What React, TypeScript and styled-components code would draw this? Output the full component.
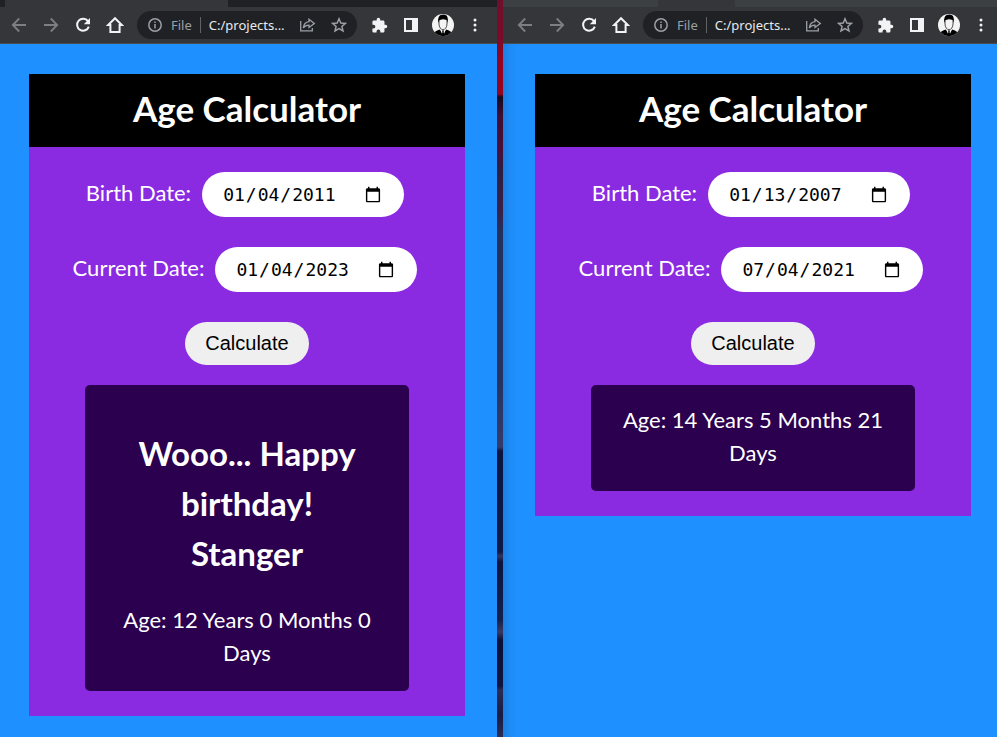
import React, { useId, useState } from "react";
import styled, { createGlobalStyle } from "styled-components";

const GlobalStyle = createGlobalStyle`
  *, *::before, *::after { box-sizing: border-box; }
  body { margin: 0; background: #1e90ff; }
`;

const Desktop = styled.main`
  display: grid;
  grid-template-columns: 497fr 6px 494fr;
  min-height: 100vh;
`;

const Seam = styled.div`
  background: linear-gradient(
    #6f0f2c 0,
    #7d0a2a 40px,
    #96041f 60px,
    #96041f 94px,
    #120a1c 97px,
    #3f0d33 115px,
    #4a0f38 150px,
    #2b1f42 170px,
    #3b1f48 210px,
    #24305c 230px,
    #26335f 380px,
    #303a66 430px,
    #333c68 447px,
    #0a1640 451px,
    #0d1a48 552px,
    #303560 556px,
    #0a1640 562px,
    #14204c 620px,
    #383a62 632px,
    #081238 640px,
    #0c1640 686px,
    #2a2d55 690px,
    #161c42 715px,
    #2a2d55 100%
  );
`;

const Window = styled.section<{ $shaded?: boolean }>`
  display: flex;
  flex-direction: column;
  min-width: 0;
  background: ${(p) =>
    p.$shaded
      ? "linear-gradient(90deg, #1d7fe0 0, #1e8cf7 8px, #1e90ff 14px)"
      : "#1e90ff"};
`;

const TabStrip = styled.div<{ $color: string }>`
  display: flex;
  height: 7px;
  background: ${(p) => p.$color};
`;

const ActiveTab = styled.div<{ $before: number; $width: number }>`
  flex: 0 0 ${(p) => p.$width}px;
  margin-left: ${(p) => p.$before}px;
  background: #35363a;
`;

const Toolbar = styled.nav<{ $start: number; $end: number }>`
  display: flex;
  align-items: center;
  height: 37px;
  padding: 0 ${(p) => p.$end}px 0 ${(p) => p.$start}px;
  background: #35363a;
  border-bottom: 1px solid #4a4c50;
`;

const ToolButton = styled.button<{ $dim?: boolean }>`
  display: flex;
  align-items: center;
  justify-content: center;
  flex: 0 0 32px;
  height: 28px;
  padding: 0;
  border: 0;
  background: none;
  color: ${(p) => (p.$dim ? "#7d7f83" : "#f1f3f4")};
`;

const AddressBar = styled.div`
  display: flex;
  align-items: center;
  flex: 1;
  min-width: 0;
  height: 28px;
  margin: 0 6px;
  padding: 0 2px;
  border-radius: 14px;
  background: #202124;
  color: #9aa0a6;
  font: 13px/20px "Noto Sans", sans-serif;
`;

const Scheme = styled.span`
  padding-right: 8px;
  border-right: 1px solid #5f6368;
  line-height: 16px;
`;

const Address = styled.span`
  flex: 1;
  padding-left: 8px;
  color: #e8eaed;
  white-space: nowrap;
`;

const Page = styled.div<{ $left: number; $right: number }>`
  padding: 30px ${(p) => p.$right}px 20px ${(p) => p.$left}px;
  font: 22px/33px Lato, sans-serif;
  color: #fff;
  text-align: center;
`;

const Card = styled.article`
  padding-bottom: 25px;
  background: #8a2be2;
`;

const Title = styled.h1`
  margin: 0;
  padding: 8px 10px 12px;
  background: #000;
  font-size: 35px;
  line-height: 53px;
  font-weight: 700;
`;

const Form = styled.form`
  display: flex;
  flex-direction: column;
  align-items: center;
  gap: 30px;
  padding: 25px 0 20px;
`;

const Field = styled.div`
  display: flex;
  align-items: center;
  gap: 11px;
  padding-right: 4px;
`;

const Label = styled.label`
  padding-bottom: 4px;
`;

const DateInput = styled.input`
  width: 202px;
  height: 45px;
  padding: 10px 20px;
  border: 0;
  border-radius: 25px;
  background: #fff;
  color: #000;
  font: 18px "DejaVu Sans Mono", monospace;
`;

const Submit = styled.button`
  height: 43px;
  padding: 0 20px;
  border: 0;
  border-radius: 25px;
  background: #efefef;
  color: #000;
  font: 20px "Liberation Sans", Arial, sans-serif;
`;

const Result = styled.div`
  margin: 0 56px;
  padding: 18px 20px 22px;
  border-radius: 5px;
  background: #2a004f;
`;

const Greeting = styled.h2`
  margin: 25px 0;
  font-size: 33px;
  line-height: 50px;
  font-weight: 700;
`;

const Age = styled.p`
  margin: 0;
`;

const line = { fill: "none", stroke: "currentColor" } as const;

const BackIcon = () => (
  <svg width="16" height="16" viewBox="0 0 16 16" {...line} strokeWidth="1.8">
    <path d="M15 8H2M8.2 1.5 1.8 8l6.4 6.5" />
  </svg>
);

const ForwardIcon = () => (
  <svg width="16" height="16" viewBox="0 0 16 16" {...line} strokeWidth="1.8">
    <path d="M1 8h13M7.8 1.5 14.2 8l-6.4 6.5" />
  </svg>
);

const ReloadIcon = () => (
  <svg width="16" height="16" viewBox="0 0 16 16" {...line} strokeWidth="2">
    <path d="M13 4.2A6 6 0 1 0 13.8 9.6" />
    <path d="M15 1v6.2H8.8z" fill="currentColor" stroke="none" />
  </svg>
);

const HomeIcon = () => (
  <svg width="18" height="18" viewBox="0 0 18 18" {...line} strokeWidth="2">
    <path d="M9 2.2 2.2 9H4.4v7h9.2V9h2.2z" />
  </svg>
);

const InfoIcon = () => (
  <svg width="16" height="16" viewBox="0 0 16 16" {...line} strokeWidth="1.5">
    <circle cx="8" cy="8" r="6.2" />
    <path d="M8 7v4.5M8 4.5V6" />
  </svg>
);

const ShareIcon = () => (
  <svg width="17" height="16" viewBox="0 0 17 16" {...line} strokeWidth="1.3">
    <path d="M1.7 4v9.8h11.6V11" />
    <path d="M10 2.2 15.3 6.5 10 10.500V8.200C7.300 8.200 5.600 9 4.300 11 4.700 7.300 6.500 5 10 4.600z" />
  </svg>
);

const StarIcon = () => (
  <svg width="16" height="16" viewBox="0 0 16 16" {...line} strokeWidth="1.5">
    <path d="m8 1.800 1.800 4.200 4.600.4-3.500 3 1.100 4.500L8 11.500l-4 2.400 1.100-4.500-3.500-3 4.600-.4z" />
  </svg>
);

const PuzzleIcon = () => (
  <svg width="17" height="17" viewBox="0 0 24 24" fill="currentColor">
    <path d="M20.5 11H19V7c0-1.100-.9-2-2-2h-4V3.500a2.500 2.500 0 0 0-5 0V5H4c-1.100 0-2 .9-2 2v3.800h1.500a2.700 2.700 0 0 1 0 5.400H2V20c0 1.100.9 2 2 2h3.800v-1.500a2.700 2.700 0 0 1 5.400 0V22H17c1.100 0 2-.9 2-2v-4h1.500a2.500 2.500 0 0 0 0-5z" />
  </svg>
);

const PanelIcon = () => (
  <svg width="16" height="16" viewBox="0 0 16 16" fill="currentColor">
    <path fillRule="evenodd" d="M1 1h14v14H1zM3 3v10h6V3z" />
  </svg>
);

const Avatar = () => {
  const clip = useId();
  return (
    <svg width="22" height="22" viewBox="0 0 22 22">
      <clipPath id={clip}>
        <circle cx="11" cy="11" r="11" />
      </clipPath>
      <g clipPath={`url(#${clip})`}>
        <path fill="#f4f4f4" d="M0 0h22v22H0z" />
        <path d="M1.500 22c0-4 2-5 6.500-6.500L11 19l3-3.500c4.500 1.500 6.500 2.500 6.500 6.500z" />
        <path fill="#f4f4f4" d="m7.800 15 3.200 7 3.200-7-3.200 1.500z" />
        <path d="M10 16.500h2l-.4 1.500.9 4h-3l.9-4z" />
        <path
          fill="#f4f4f4"
          stroke="#222"
          strokeWidth=".8"
          d="M7 5h8v5c0 3-2 5.800-4 5.800S7 13 7 10z"
        />
        <path d="M6.500 9C5.500 3.500 7 .5 11.500.5 15.500.5 16.500 4 15.500 9L14.800 6 11 4.800 7.300 6.300z" />
      </g>
    </svg>
  );
};

const MenuIcon = () => (
  <svg width="4" height="16" viewBox="0 0 4 16" fill="currentColor">
    <circle cx="2" cy="3" r="1.500" />
    <circle cx="2" cy="8" r="1.500" />
    <circle cx="2" cy="13" r="1.500" />
  </svg>
);

const AddressIcon = styled(ToolButton)`
  color: #9aa0a6;
`;

function BrowserBar({ start, end }: { start: number; end: number }) {
  return (
    <Toolbar $start={start} $end={end} aria-label="Browser toolbar">
      <ToolButton $dim aria-label="Back"><BackIcon /></ToolButton>
      <ToolButton $dim aria-label="Forward"><ForwardIcon /></ToolButton>
      <ToolButton aria-label="Reload"><ReloadIcon /></ToolButton>
      <ToolButton aria-label="Home"><HomeIcon /></ToolButton>
      <AddressBar>
        <AddressIcon aria-label="Page information"><InfoIcon /></AddressIcon>
        <Scheme>File</Scheme>
        <Address>C:/projects...</Address>
        <AddressIcon aria-label="Share"><ShareIcon /></AddressIcon>
        <AddressIcon aria-label="Bookmark"><StarIcon /></AddressIcon>
      </AddressBar>
      <ToolButton aria-label="Extensions"><PuzzleIcon /></ToolButton>
      <ToolButton aria-label="Side panel"><PanelIcon /></ToolButton>
      <ToolButton aria-label="Profile"><Avatar /></ToolButton>
      <ToolButton aria-label="Menu"><MenuIcon /></ToolButton>
    </Toolbar>
  );
}

interface CalculatorProps {
  birth: string;
  current: string;
  age: string;
  birthday?: boolean;
}

function Calculator({ birth, current, age, birthday }: CalculatorProps) {
  const id = useId();
  const [birthDate, setBirthDate] = useState(birth);
  const [currentDate, setCurrentDate] = useState(current);
  return (
    <Card>
      <Title>Age Calculator</Title>
      <Form onSubmit={(e) => e.preventDefault()}>
        <Field>
          <Label htmlFor={`${id}-birth`}>Birth Date:</Label>
          <DateInput
            id={`${id}-birth`}
            type="date"
            value={birthDate}
            onChange={(e) => setBirthDate(e.target.value)}
          />
        </Field>
        <Field>
          <Label htmlFor={`${id}-current`}>Current Date:</Label>
          <DateInput
            id={`${id}-current`}
            type="date"
            value={currentDate}
            onChange={(e) => setCurrentDate(e.target.value)}
          />
        </Field>
        <Submit type="submit">Calculate</Submit>
      </Form>
      <Result>
        {birthday && (
          <Greeting>
            Wooo... Happy birthday!
            <br />
            Stanger
          </Greeting>
        )}
        <Age>{age}</Age>
      </Result>
    </Card>
  );
}

export default function App() {
  return (
    <>
      <GlobalStyle />
      <Desktop>
        <Window>
          <TabStrip $color="#202124">
            <ActiveTab $before={5} $width={223} />
          </TabStrip>
          <BrowserBar start={3} end={6} />
          <Page $left={29} $right={32}>
            <Calculator
              birth="2011-01-04"
              current="2023-01-04"
              age="Age: 12 Years 0 Months 0 Days"
              birthday
            />
          </Page>
        </Window>
        <Seam />
        <Window $shaded>
          <TabStrip $color="#3c4043">
            <ActiveTab $before={155} $width={77} />
          </TabStrip>
          <BrowserBar start={6} end={0} />
          <Page $left={32} $right={26}>
            <Calculator
              birth="2007-01-13"
              current="2021-07-04"
              age="Age: 14 Years 5 Months 21 Days"
            />
          </Page>
        </Window>
      </Desktop>
    </>
  );
}
